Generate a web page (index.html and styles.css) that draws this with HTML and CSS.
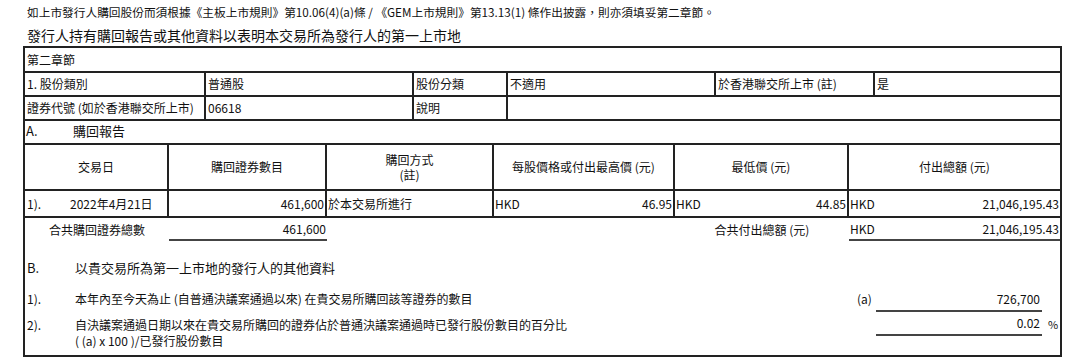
FILE: index.html
```html
<!DOCTYPE html>
<html lang="zh-Hant">
<head>
<meta charset="utf-8">
<title>第二章節</title>
<link rel="stylesheet" href="styles.css">
</head>
<body>
<div class="intro">如上市發行人購回股份而須根據《主板上市規則》第10.06(4)(a)條 / 《GEM上市規則》第13.13(1) 條作出披露，則亦須填妥第二章節。</div>
<div class="title">發行人持有購回報告或其他資料以表明本交易所為發行人的第一上市地</div>
<div class="form">
  <div class="top-grid">
    <div class="cell span-all">第二章節</div>
    <div class="cell">1. 股份類別</div>
    <div class="cell">普通股</div>
    <div class="cell">股份分類</div>
    <div class="cell">不適用</div>
    <div class="cell">於香港聯交所上市 (註)</div>
    <div class="cell end">是</div>
    <div class="cell">證券代號 (如於香港聯交所上市)</div>
    <div class="cell">06618</div>
    <div class="cell">說明</div>
    <div class="cell span-rest"></div>
    <div class="cell span-all sec-a"><span class="a-lbl">A.</span>購回報告</div>
  </div>
  <div class="rep-grid">
    <div class="cell h">交易日</div>
    <div class="cell h">購回證券數目</div>
    <div class="cell h"><span class="stack">購回方式<br>(註)</span></div>
    <div class="cell h">每股價格或付出最高價 (元)</div>
    <div class="cell h">最低價 (元)</div>
    <div class="cell h end">付出總額 (元)</div>

    <div class="cell d1"><span class="idx">1).</span>2022年4月21日</div>
    <div class="cell num">461,600</div>
    <div class="cell tight">於本交易所進行</div>
    <div class="cell money"><span>HKD</span><span>46.95</span></div>
    <div class="cell money"><span>HKD</span><span>44.85</span></div>
    <div class="cell money end"><span>HKD</span><span>21,046,195.43</span></div>

    <div class="cell t h">合共購回證券總數</div>
    <div class="cell t num ul">461,600</div>
    <div class="cell t"></div>
    <div class="cell t"></div>
    <div class="cell t h">合共付出總額 (元)</div>
    <div class="cell t money ul"><span>HKD</span><span>21,046,195.43</span></div>
  </div>
  <div class="b-sec">
    <div class="b-row b-head">
      <div class="b-lbl">B.</div>
      <div class="b-text">以貴交易所為第一上市地的發行人的其他資料</div>
    </div>
    <div class="b-row b-row1">
      <div class="b-lbl">1).</div>
      <div class="b-text">本年內至今天為止 (自普通決議案通過以來) 在貴交易所購回該等證券的數目</div>
      <div class="b-a">(a)</div>
      <div class="val">726,700</div>
      <div></div>
    </div>
    <div class="b-row b-row2">
      <div class="b-lbl">2).</div>
      <div class="b-text">自決議案通過日期以來在貴交易所購回的證券佔於普通決議案通過時已發行股份數目的百分比<br>( (a) x 100 )/已發行股份數目</div>
      <div></div>
      <div class="val">0.02</div>
      <div class="pct">%</div>
    </div>
  </div>
</div>
</body>
</html>
```

FILE: styles.css
```css
body {
  margin: 0;
  background: #fff;
  color: #111;
  font-family: "Noto Sans CJK TC", "Noto Sans", sans-serif;
  font-size: 12px;
}

.intro {
  padding: 4px 0 0 27px;
  font-size: 11.7px;
  line-height: 16px;
}

.title {
  margin-top: 5px;
  padding-left: 27px;
  font-size: 14px;
  line-height: 20px;
}

.form {
  margin: 1px 0 0 23px;
  width: 1035px;
  border: 2px solid #222;
}

.top-grid {
  display: grid;
  grid-template-columns: 181px 208px 94px 208px 159px 185px;
  grid-template-rows: 25px 24px 24px 24px;
}

.rep-grid {
  display: grid;
  grid-template-columns: 144px 158px 167px 181px 174px 211px;
  grid-template-rows: 46px 27px 23px;
}

.cell {
  box-sizing: border-box;
  border-right: 2px solid #222;
  border-bottom: 2px solid #222;
  padding: 0 2px;
  display: flex;
  align-items: center;
  white-space: nowrap;
  line-height: 16px;
  overflow: hidden;
}

.cell.end {
  border-right: none;
}

.span-all {
  grid-column: 1 / -1;
  border-right: none;
}

.span-rest {
  grid-column: 4 / -1;
  border-right: none;
}

.sec-a {
  font-size: 13px;
  padding-left: 0;
  padding-bottom: 2px;
}

.a-lbl {
  width: 47px;
  padding-left: 1px;
}

.h {
  justify-content: center;
  text-align: center;
}

.stack {
  display: block;
  line-height: 15px;
}

.d1 {
  padding-top: 1px;
}

.idx {
  width: 43px;
}

.num {
  justify-content: flex-end;
  padding-right: 1px;
}

.tight {
  padding-left: 1px;
}

.money {
  justify-content: space-between;
  padding: 0 1px;
}

.cell.t {
  border-right: none;
  border-bottom: none;
}

.cell.t.ul {
  border-bottom: 2px solid #444;
}

.b-sec {
  padding-bottom: 6px;
}

.b-row {
  display: grid;
  grid-template-columns: 50px 777px 24px 166px 18px;
}

.b-lbl {
  padding-left: 2px;
}

.b-head {
  margin-top: 15px;
  height: 24px;
  line-height: 24px;
  font-size: 13px;
}

.b-row1 {
  margin-top: 8px;
  line-height: 22px;
}

.b-row2 .b-lbl,
.b-row2 .b-text {
  padding-top: 5px;
  line-height: 16px;
}

.b-a {
  padding-left: 5px;
  line-height: 22px;
}

.val {
  box-sizing: border-box;
  height: 24px;
  line-height: 22px;
  text-align: right;
  padding-right: 2px;
  border-bottom: 2px solid #444;
}

.pct {
  padding-left: 6px;
  font-size: 11px;
  line-height: 24px;
}
```
